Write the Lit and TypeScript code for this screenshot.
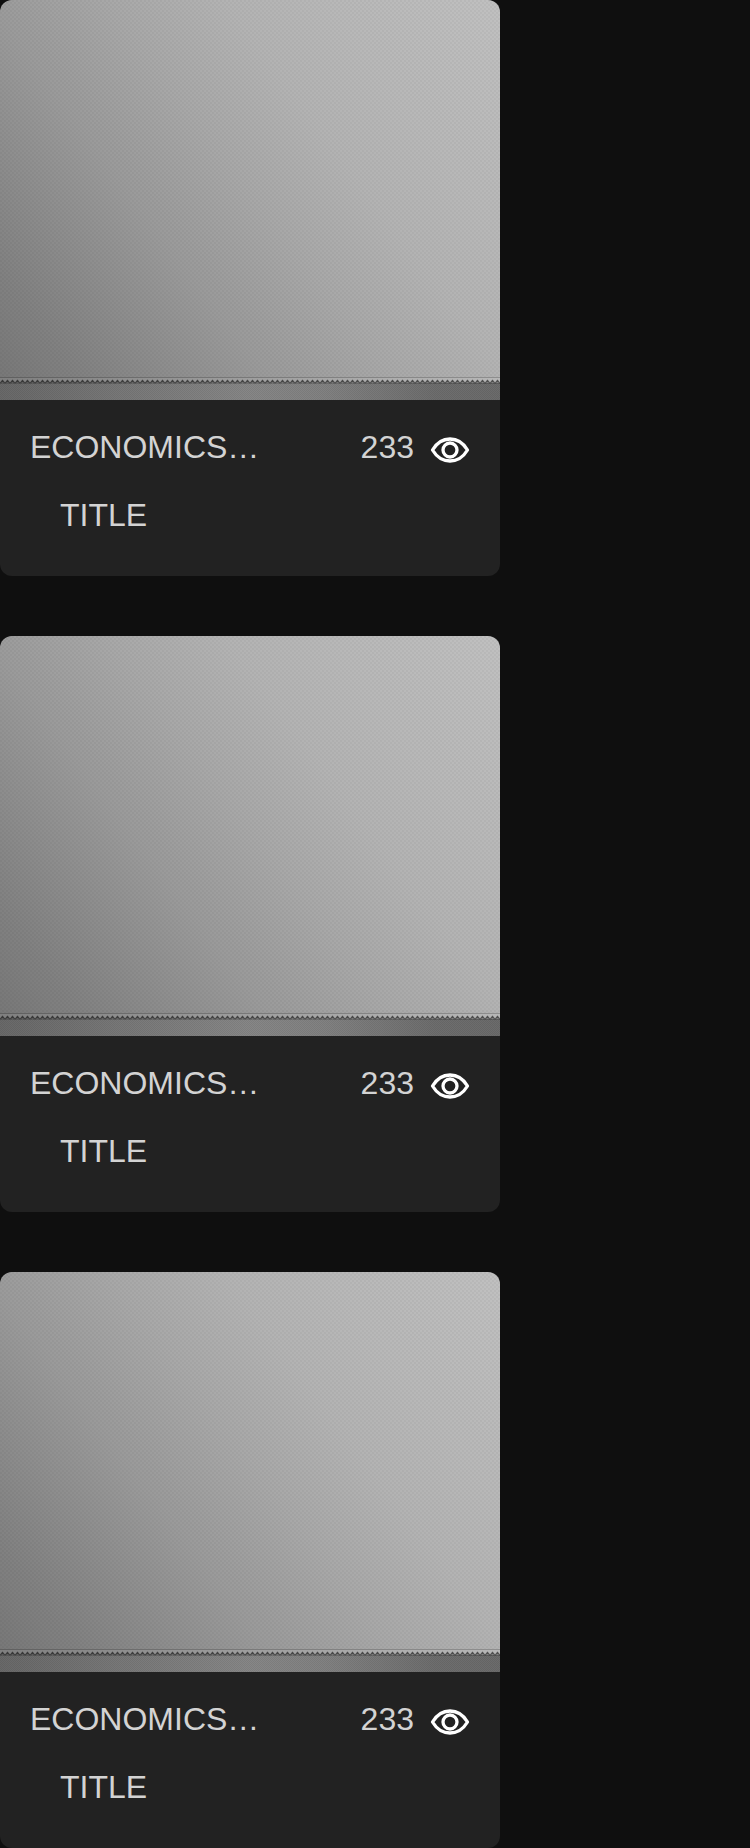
import { LitElement, html, css } from "lit";
import { customElement, property } from "lit/decorators.js";

interface Course {
  category: string;
  views: number;
  title: string;
}

const courses: Course[] = [
  { category: "ECONOMICS…", views: 233, title: "TITLE" },
  { category: "ECONOMICS…", views: 233, title: "TITLE" },
  { category: "ECONOMICS…", views: 233, title: "TITLE" },
];

@customElement("fabric-cover")
export class FabricCover extends LitElement {
  static styles = css`
    :host {
      display: block;
    }
    .cover {
      display: block;
      width: 100%;
      height: auto;
    }
  `;

  render() {
    return html`
      <svg class="cover" viewBox="0 0 500 400" aria-hidden="true">
        <defs>
          <linearGradient id="light" gradientUnits="userSpaceOnUse" x1="0" y1="377" x2="500" y2="2">
            <stop offset="0" stop-color="#787878" />
            <stop offset="0.1" stop-color="#818181" />
            <stop offset="0.34" stop-color="#9a9a9a" />
            <stop offset="0.5" stop-color="#a8a8a8" />
            <stop offset="0.65" stop-color="#b3b3b3" />
            <stop offset="1" stop-color="#c0c0c0" />
          </linearGradient>
          <linearGradient id="band">
            <stop offset="0" stop-color="#696969" />
            <stop offset="0.25" stop-color="#797979" />
            <stop offset="0.5" stop-color="#878787" />
            <stop offset="0.65" stop-color="#828282" />
            <stop offset="0.87" stop-color="#6e6e6e" />
            <stop offset="1" stop-color="#6c6c6c" />
          </linearGradient>
          <pattern id="weave" width="4" height="4" patternUnits="userSpaceOnUse">
            <path d="M0 0h2v2h-2zM2 2h2v2h-2z" fill="#000" fill-opacity="0.035" />
          </pattern>
          <pattern id="mesh" width="2" height="2" patternUnits="userSpaceOnUse">
            <path d="M0 0h1v1h-1zM1 1h1v1h-1z" fill="#000" fill-opacity="0.07" />
          </pattern>
          <pattern id="teeth" width="5" height="8" y="378" patternUnits="userSpaceOnUse">
            <path d="M0 4.500L2.500 1.500L5 4.500V6L2.500 5.500L0 6z" fill="#000" fill-opacity="0.25" />
            <path d="M0 4.500L2.500 1.500L5 4.500V5.200L2.500 4L0 5.200z" fill="#000" fill-opacity="0.42" />
          </pattern>
        </defs>
        <rect width="500" height="400" fill="url(#light)" />
        <rect width="500" height="377" fill="url(#weave)" />
        <rect y="377" width="500" height="1" fill="#000" fill-opacity="0.2" />
        <rect y="378" width="500" height="5" fill="#fff" fill-opacity="0.06" />
        <rect y="383" width="500" height="17" fill="url(#band)" />
        <rect y="383" width="500" height="17" fill="url(#mesh)" />
        <rect y="378" width="500" height="8" fill="url(#teeth)" />
      </svg>
    `;
  }
}

@customElement("course-card")
export class CourseCard extends LitElement {
  @property({ attribute: false }) course!: Course;

  static styles = css`
    :host {
      display: block;
    }
    .card {
      overflow: hidden;
      border-radius: 12px;
      background: #222222;
      color: #d3d3d3;
      font-size: 32px;
      line-height: 34px;
    }
    .body {
      display: grid;
      gap: 28px;
      padding: 30px 30px 44px;
    }
    .meta {
      display: flex;
      justify-content: space-between;
      align-items: flex-start;
    }
    .category {
      white-space: nowrap;
    }
    .views {
      display: flex;
      align-items: flex-start;
      gap: 16px;
    }
    .eye {
      display: block;
      width: 40px;
      height: 40px;
    }
    .title {
      margin: 0;
      padding: 0 30px;
      font-size: 32px;
      font-weight: 400;
    }
  `;

  render() {
    const { category, views, title } = this.course;
    return html`
      <article class="card">
        <fabric-cover></fabric-cover>
        <div class="body">
          <div class="meta">
            <span class="category">${category}</span>
            <span class="views">
              ${views}
              <svg class="eye" viewBox="0 0 40 40" fill="none" stroke="#fff" stroke-width="3.300" stroke-linejoin="round" role="img" aria-label="views">
                <path d="M2.500 20C7 12.500 13 9 20 9S33 12.500 37.500 20C33 27.500 27 31 20 31S7 27.500 2.500 20Z" />
                <circle cx="20" cy="20" r="7" />
              </svg>
            </span>
          </div>
          <h2 class="title">${title}</h2>
        </div>
      </article>
    `;
  }
}

@customElement("app-root")
export class AppRoot extends LitElement {
  static styles = css`
    :host {
      display: block;
      min-height: 100vh;
      background: #0f0f0f;
      font-family: "Liberation Sans", Arial, sans-serif;
    }
    .list {
      display: grid;
      gap: 60px;
      width: 100%;
      max-width: 500px;
    }
  `;

  render() {
    return html`
      <main class="list">
        ${courses.map((course) => html`<course-card .course=${course}></course-card>`)}
      </main>
    `;
  }
}
